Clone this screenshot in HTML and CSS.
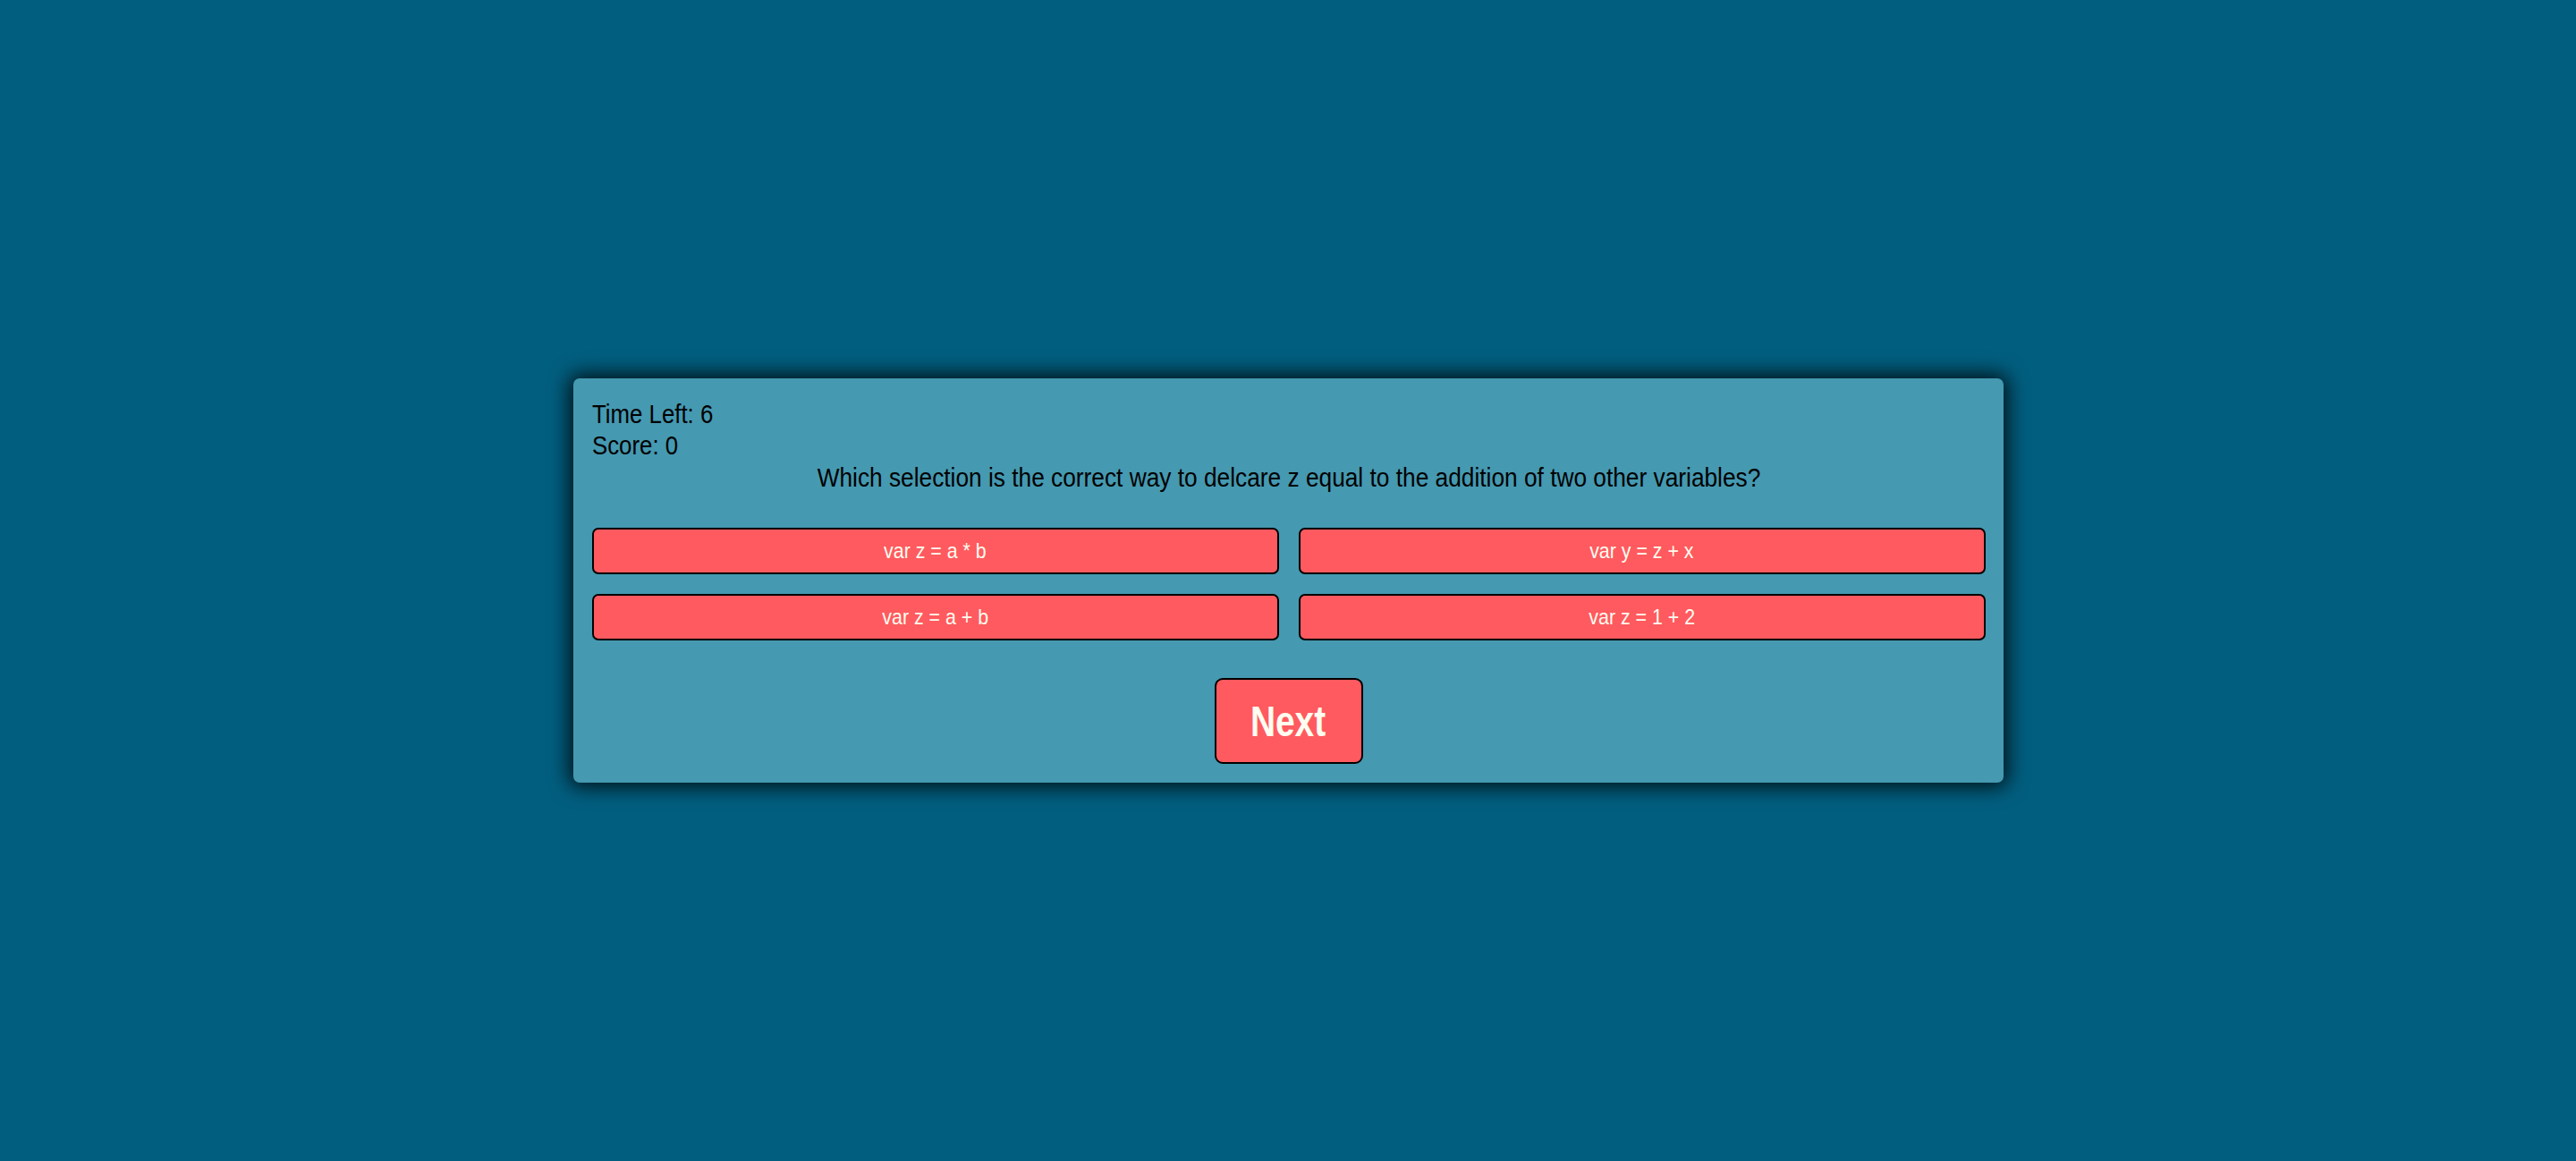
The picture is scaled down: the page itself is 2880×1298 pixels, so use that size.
FILE: index.html
```html
<!DOCTYPE html>
<html lang="en">
<head>
<meta charset="utf-8">
<title>Quiz</title>
<link rel="stylesheet" href="styles.css">
</head>
<body>
<main class="stage">
  <section class="card">
    <div class="stat"><span class="narrow left">Time Left: 6</span></div>
    <div class="stat"><span class="narrow left">Score: 0</span></div>
    <p class="question"><span class="narrow q">Which selection is the correct way to delcare z equal to the addition of two other variables?</span></p>
    <div class="answers">
      <button class="answer"><span class="narrow a">var z = a * b</span></button>
      <button class="answer"><span class="narrow a">var y = z + x</span></button>
      <button class="answer"><span class="narrow a">var z = a + b</span></button>
      <button class="answer"><span class="narrow a">var z = 1 + 2</span></button>
    </div>
    <div class="actions">
      <button class="next"><span class="narrow n">Next</span></button>
    </div>
  </section>
</main>
</body>
</html>
```

FILE: styles.css
```css
html, body {
  margin: 0;
  padding: 0;
  height: 100%;
}
body {
  background: #025e7f;
  font-family: "Liberation Sans Narrow", "Arial Narrow", "Liberation Sans", Arial, sans-serif;
  color: #000;
}
.stage {
  height: 100%;
  display: flex;
  align-items: center;
  justify-content: center;
}
.card {
  width: 1599px;
  box-sizing: border-box;
  background: #4599b1;
  border-radius: 7px;
  box-shadow: 0 0 22px 5px rgba(0, 0, 0, 0.8);
  padding: 22px 20px 21px 21px;
}
.narrow {
  display: inline-block;
  white-space: nowrap;
}
.narrow.left {
  transform: scaleX(0.86);
  transform-origin: left center;
}
.narrow.q {
  transform: scaleX(0.876);
  transform-origin: center;
}
.narrow.a {
  transform: scaleX(0.89);
  transform-origin: center;
}
.narrow.n {
  transform: scaleX(0.81);
  transform-origin: center;
}
.stat {
  font-size: 30px;
  line-height: 35px;
}
.question {
  margin: 1px 0 0;
  font-size: 30px;
  line-height: 35px;
  text-align: center;
}
.answers {
  margin-top: 39px;
  display: grid;
  grid-template-columns: 1fr 1fr;
  gap: 22px;
}
.answer {
  height: 52px;
  background: #ff5a5f;
  color: #fffdf0;
  border: 2px solid #000;
  border-radius: 7px;
  font-family: inherit;
  font-size: 24px;
  padding: 0;
}
.actions {
  margin-top: 42px;
  display: flex;
  justify-content: center;
}
.next {
  width: 166px;
  height: 96px;
  background: #ff5a5f;
  color: #fffdf0;
  border: 2px solid #000;
  border-radius: 9px;
  font-family: inherit;
  font-weight: bold;
  font-size: 48px;
  padding: 0;
}
```
